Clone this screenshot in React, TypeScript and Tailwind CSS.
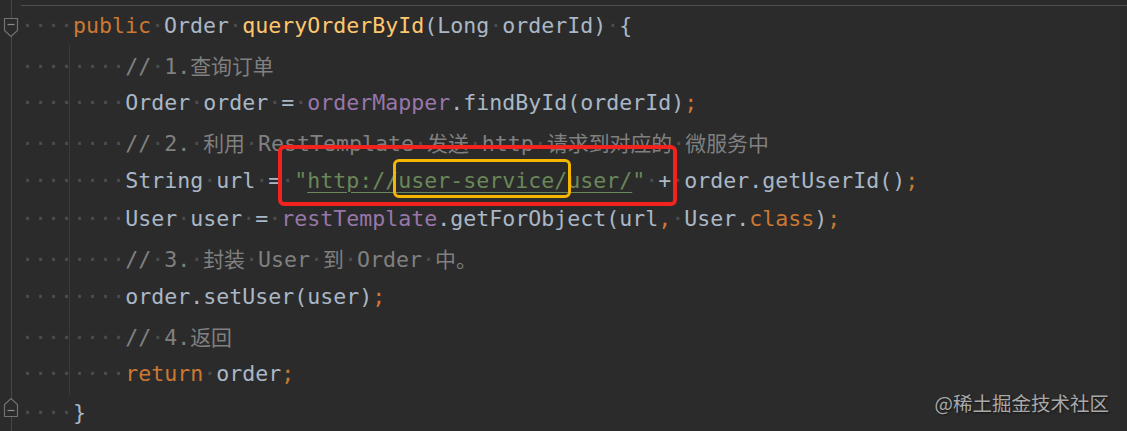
import React from "react";

type Tok = [string, string];

const C = {
  plain: "text-[#a9b7c6]",
  kw: "text-[#cc7832]",
  fn: "text-[#ffc66d]",
  cm: "text-[#808080]",
  fld: "text-[#9876aa]",
  str: "text-[#6a8759]",
  url: "text-[#6a8759] underline decoration-[#6a8759] underline-offset-[4px] decoration-1",
};

const CJK = /([\u3000-\u303f\u4e00-\u9fff\uff00-\uffef]+)/;

function renderText(t: string, keyBase: string) {
  const parts = t.split(/( )/).filter((p) => p !== "");
  return parts.map((p, i) => {
    if (p === " ") {
      return (
        <span key={keyBase + "s" + i} className="text-[#4d4d4d]">
          ·
        </span>
      );
    }
    return p
      .split(CJK)
      .filter((q) => q !== "")
      .map((q, j) =>
        CJK.test(q) ? (
          <span
            key={keyBase + "c" + i + "-" + j}
            className="text-[20.9px] font-['Noto_Sans_CJK_SC',sans-serif]"
          >
            {q}
          </span>
        ) : (
          <React.Fragment key={keyBase + "t" + i + "-" + j}>{q}</React.Fragment>
        )
      );
  });
}

const lines: Tok[][] = [
  [
    ["    ", C.plain],
    ["public", C.kw],
    [" Order ", C.plain],
    ["queryOrderById", C.fn],
    ["(Long orderId) {", C.plain],
  ],
  [
    ["        ", C.plain],
    ["// 1.查询订单", C.cm],
  ],
  [
    ["        Order order = ", C.plain],
    ["orderMapper", C.fld],
    [".findById(orderId)", C.plain],
    [";", C.kw],
  ],
  [
    ["        ", C.plain],
    ["// 2. 利用 RestTemplate 发送 http 请求到对应的 微服务中", C.cm],
  ],
  [
    ["        String url = ", C.plain],
    ['"', C.str],
    ["http://user-service/user/", C.url],
    ['"', C.str],
    [" + order.getUserId()", C.plain],
    [";", C.kw],
  ],
  [
    ["        User user = ", C.plain],
    ["restTemplate", C.fld],
    [".getForObject(url", C.plain],
    [",", C.kw],
    [" User.", C.plain],
    ["class", C.kw],
    [")", C.plain],
    [";", C.kw],
  ],
  [
    ["        ", C.plain],
    ["// 3. 封装 User 到 Order 中。", C.cm],
  ],
  [
    ["        order.setUser(user)", C.plain],
    [";", C.kw],
  ],
  [
    ["        ", C.plain],
    ["// 4.返回", C.cm],
  ],
  [
    ["        ", C.plain],
    ["return", C.kw],
    [" order", C.plain],
    [";", C.kw],
  ],
  [
    ["    ", C.plain],
    ["}", C.plain],
  ],
];

function FoldDown() {
  return (
    <svg width="16" height="21" viewBox="0 0 16 21" className="block">
      <path
        d="M1.5 1.5 H14.5 V13.5 L8 19.5 L1.5 13.5 Z"
        fill="#2b2b2b"
        stroke="#727272"
        strokeWidth="1.2"
      />
      <path d="M4.5 7.5 H11.5" stroke="#8c8c8c" strokeWidth="1.2" />
    </svg>
  );
}

function FoldUp() {
  return (
    <svg width="16" height="21" viewBox="0 0 16 21" className="block">
      <path
        d="M1.5 19.5 H14.5 V7.5 L8 1.5 L1.5 7.5 Z"
        fill="#2b2b2b"
        stroke="#727272"
        strokeWidth="1.2"
      />
      <path d="M4.5 13.5 H11.5" stroke="#8c8c8c" strokeWidth="1.2" />
    </svg>
  );
}

export default function App() {
  return (
    <div className="relative w-[1127px] h-[431px] overflow-hidden bg-[#2b2b2b] flex">
      {/* gutter */}
      <div className="w-[12px] shrink-0 border-r border-[#474747]" />
      {/* code area */}
      <div className="flex-1 pt-[5px] pl-[9px]">
        <div className="border-t border-[#4e4e4e]" />
        <div className="mt-[1px] font-['DejaVu_Sans_Mono','Noto_Sans_CJK_SC',monospace] text-[21.6px] leading-[38.7px] whitespace-pre">
          {lines.map((toks, li) => (
            <div key={li} className="h-[38.7px]">
              {toks.map(([t, cls], ti) => (
                <span key={ti} className={cls}>
                  {renderText(t, li + "-" + ti)}
                </span>
              ))}
            </div>
          ))}
        </div>
      </div>

      {/* indent guide */}
      <div className="absolute left-[69px] top-[45px] w-px h-[350px] bg-[#3a3a3a]" />

      {/* fold markers */}
      <div className="absolute left-[3px] top-[17px]">
        <FoldDown />
      </div>
      <div className="absolute left-[3px] top-[397px]">
        <FoldUp />
      </div>

      {/* annotation boxes */}
      <div className="absolute left-[278px] top-[145px] w-[399px] h-[61px] border-[4px] border-[#f2221e] rounded-[6px]" />
      <div className="absolute left-[393px] top-[159px] w-[178px] h-[39px] border-[3px] border-[#f6b600] rounded-[6px]" />

      {/* watermark */}
      <div className="absolute right-[18px] top-[391px] leading-[24px] text-[19.5px] text-[#a8a8a8] font-['Noto_Sans_CJK_SC',sans-serif] [text-shadow:1px_1px_2px_rgba(0,0,0,0.6)]">
        @稀土掘金技术社区
      </div>
    </div>
  );
}
